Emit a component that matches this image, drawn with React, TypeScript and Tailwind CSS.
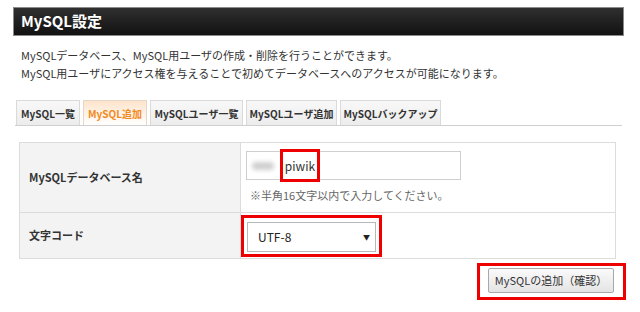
const tabs = [
  { label: 'MySQL一覧', w: 'w-[64px]' },
  { label: 'MySQL追加', w: 'w-[64px]', active: true },
  { label: 'MySQLユーザ一覧', w: 'w-[93px]' },
  { label: 'MySQLユーザ追加', w: 'w-[91px]' },
  { label: 'MySQLバックアップ', w: 'w-[101px]' },
]

export default function App() {
  return (
    <div className="min-h-[312px] w-[640px] bg-white font-['Noto_Sans_CJK_JP','Noto_Sans',sans-serif] text-[#333]">
      <div className="w-[624px] pl-[13px] pt-[7px]">
        <div className="flex h-[29px] w-[611px] items-center border border-[#8a8a8a] bg-gradient-to-b from-[#303030] to-[#121212] pl-[7px] text-[15px] font-bold text-white">
          MySQL設定
        </div>

        <div className="mt-[10px] pl-[8px] text-[11px] leading-[18px] text-[#333]">
          <p>MySQLデータベース、MySQL用ユーザの作成・削除を行うことができます。</p>
          <p>MySQL用ユーザにアクセス権を与えることで初めてデータベースへのアクセスが可能になります。</p>
        </div>

        <div className="mt-[18px] ml-[2px] flex w-[607px] items-end gap-[3px] border-b border-[#cfcfcf] pl-[1px]">
          {tabs.map((tab) =>
            tab.active ? (
              <div
                key={tab.label}
                className={`${tab.w} flex h-[25px] items-center justify-center whitespace-nowrap border border-b-0 border-[#e6d6c6] bg-gradient-to-b from-[#fde4cc] to-white text-[10px] font-bold text-[#f08a1e]`}
              >
                {tab.label}
              </div>
            ) : (
              <div
                key={tab.label}
                className={`${tab.w} flex h-[25px] items-center justify-center whitespace-nowrap border border-b-0 border-[#dadada] bg-gradient-to-b from-[#f8f8f8] to-[#ececec] text-[10px] font-bold text-[#333]`}
              >
                {tab.label}
              </div>
            ),
          )}
        </div>

        <div className="mt-[16px] ml-[6px] grid w-[597px] grid-cols-[221px_1fr] border border-[#dcdcdc]">
          <div className="flex h-[70px] items-center border-r border-b border-[#dcdcdc] bg-[#f3f3f3] pl-[9px] text-[11px] font-bold">
            MySQLデータベース名
          </div>
          <div className="h-[70px] border-b border-[#dcdcdc] pl-[5px] pt-[8px]">
            <div className="relative flex h-[29px] w-[215px] items-center border border-[#cfcfcf] bg-white">
              <span className="ml-[5px] h-[8px] w-[22px] rounded-full bg-[#cfcfcf] blur-[2px]" />
              <span className="absolute top-[-3px] left-[33px] flex h-[33px] w-[40px] items-center justify-center border-[3px] border-[#ee0000] text-[12px] text-[#333]">
                piwik
              </span>
            </div>
            <p className="mt-[7px] pl-[4px] text-[11px] leading-[16px] text-[#666]">
              ※半角16文字以内で入力してください。
            </p>
          </div>
          <div className="flex h-[45px] items-center border-r border-[#dcdcdc] bg-[#f3f3f3] pl-[9px] text-[11px] font-bold">
            文字コード
          </div>
          <div className="h-[45px] pt-[2px]">
            <div className="h-[42px] w-[141px] border-[3px] border-[#ee0000] px-[3px] pt-[4px]">
              <div className="flex h-[30px] w-[129px] items-center justify-between border border-[#b8b8b8] bg-white pr-[5px] pl-[10px] text-[12px] text-[#222]">
                <span>UTF-8</span>
                <span className="text-[7px]">▼</span>
              </div>
            </div>
          </div>
        </div>

        <div className="mt-[4px] flex w-[613px] justify-end">
          <div className="h-[37px] border-[3px] border-[#ee0000] pr-[9px] pl-[8px]">
            <button className="h-[25px] w-[126px] whitespace-nowrap rounded-[2px] border border-[#a8a8a8] bg-gradient-to-b from-[#fafafa] to-[#e4e4e4] text-[11px] text-[#333]">
              MySQLの追加（確認）
            </button>
          </div>
        </div>
      </div>
    </div>
  )
}
